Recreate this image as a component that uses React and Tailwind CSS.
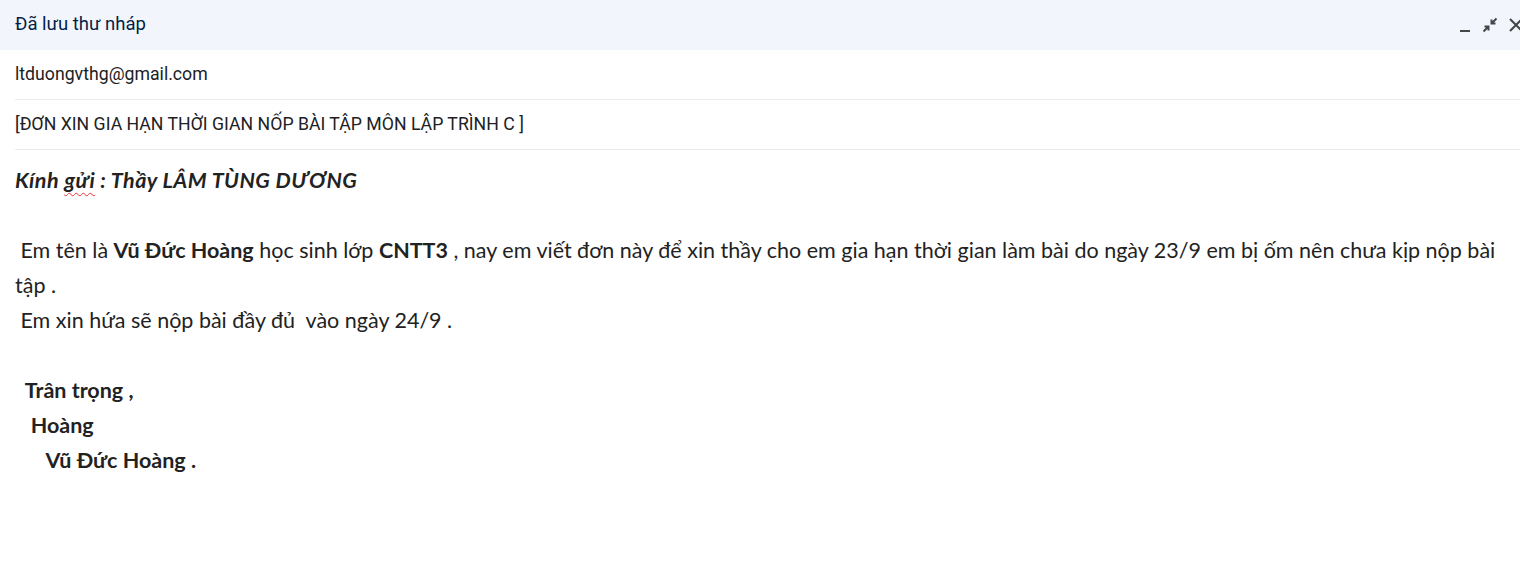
export default function App() {
    return (
        <div className="w-[1520px] h-[576px] bg-white overflow-hidden">
            {/* Title bar */}
            <div className="h-[50px] bg-[#f2f6fc] flex items-center justify-between pl-[15px]">
                <span className="text-[18.5px] font-normal text-[#041e49] font-['Roboto',sans-serif]">Đã lưu thư nháp</span>
                <div className="flex items-center gap-[10px] -mr-[4px] text-[#444746]">
                    <svg width="14" height="14" viewBox="0 0 14 14" className="mt-[4px]">
                        <rect x="2" y="10" width="10" height="2" fill="currentColor" />
                    </svg>
                    <svg width="16" height="16" viewBox="0 0 16 16">
                        <path d="M14.5 1.5 L9.8 6.2 M9.5 2.5 V6.5 H13.5 M1.5 14.5 L6.2 9.8 M2.5 9.5 H6.5 V13.5" stroke="currentColor" strokeWidth="2" fill="none" />
                    </svg>
                    <svg width="16" height="16" viewBox="0 0 16 16">
                        <path d="M2 2 L14 14 M14 2 L2 14" stroke="currentColor" strokeWidth="2" fill="none" />
                    </svg>
                </div>
            </div>

            {/* Fields */}
            <div className="pl-[15px] font-['Roboto',sans-serif] text-[17.7px] text-[#202124]">
                <div className="h-[50px] flex items-center border-b border-[#ebebeb]">ltduongvthg@gmail.com</div>
                <div className="h-[50px] flex items-center border-b border-[#ebebeb]">[ĐƠN XIN GIA HẠN THỜI GIAN NỐP BÀI TẬP MÔN LẬP TRÌNH C ]</div>
            </div>

            {/* Body */}
            <div className="pl-[15px] pt-[13px] font-['Lato',sans-serif] text-[21.5px] leading-[35px] text-[#222222] whitespace-pre">
                <p className="font-bold italic tracking-[0.45px]">
                    Kính <span className="underline decoration-wavy decoration-[#e53935] decoration-1 underline-offset-4">gửi</span> : Thầy LÂM TÙNG DƯƠNG
                </p>
                <p>&nbsp;</p>
                <p>
                    {" Em tên là "}<b>Vũ Đức Hoàng</b>{" học sinh lớp "}<b>CNTT3</b>{" , nay em viết đơn này để xin thầy cho em gia hạn thời gian làm bài do ngày 23/9 em bị ốm nên chưa kịp nộp bài"}
                </p>
                <p>tập .</p>
                <p>{" Em xin hứa sẽ nộp bài đầy đủ  vào ngày 24/9 ."}</p>
                <p>&nbsp;</p>
                <p className="font-bold">{"  Trân trọng ,"}</p>
                <p className="font-bold">{"   Hoàng"}</p>
                <p className="font-bold">{"      Vũ Đức Hoàng ."}</p>
            </div>
        </div>
    );
}
